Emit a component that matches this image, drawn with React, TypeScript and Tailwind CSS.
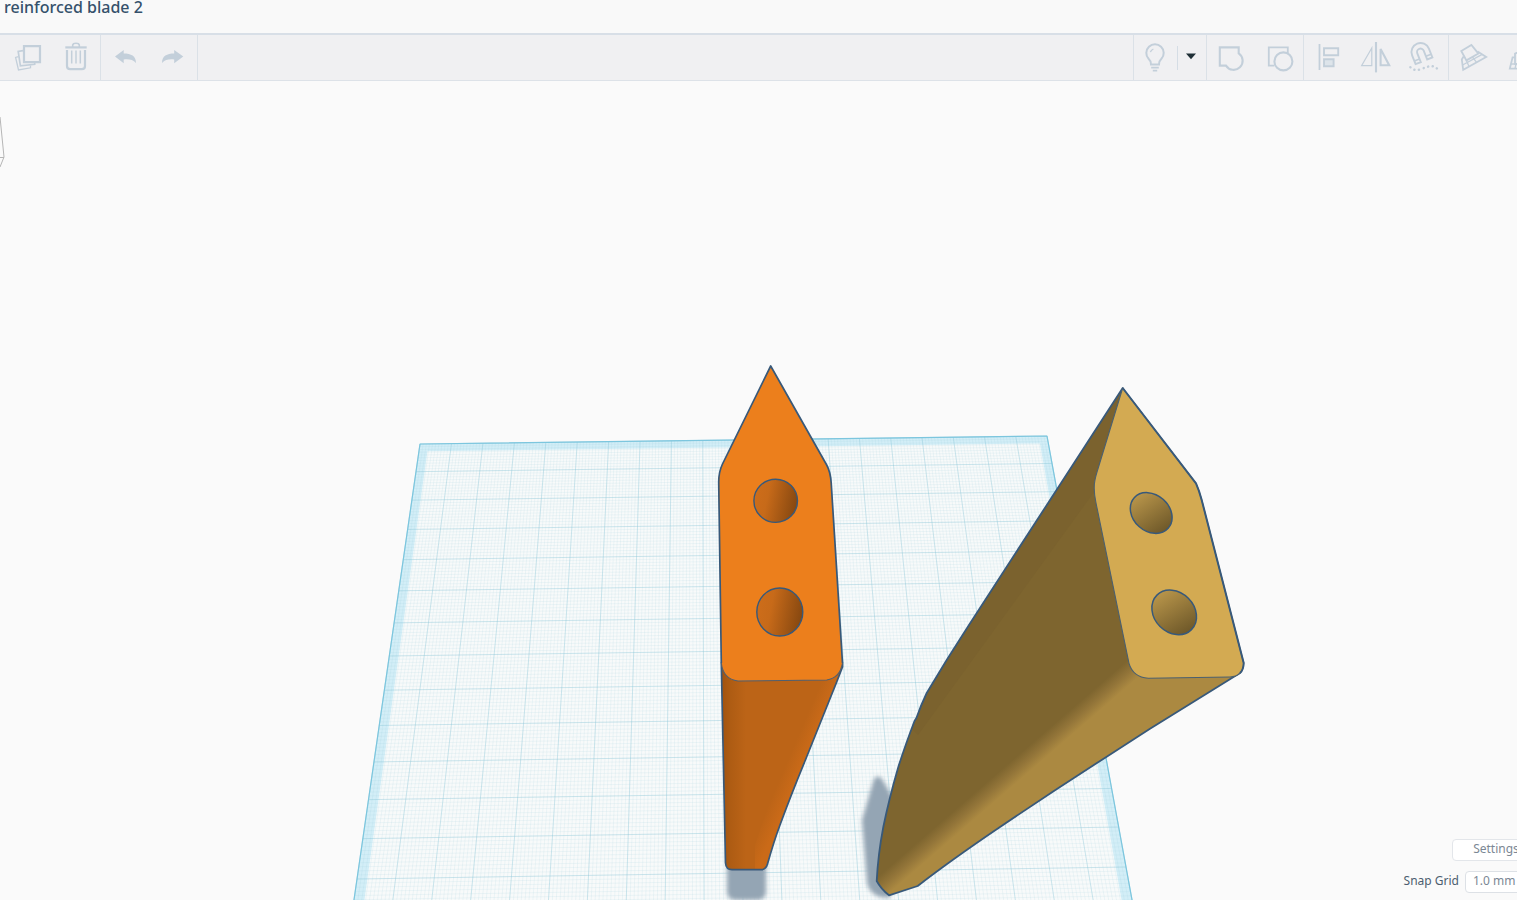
import type { ReactNode } from "react";

type Point = [number, number];

// Corners of the workplane: back left, back right, front right, front left.
const CORNERS: Point[] = [
  [420, 444],
  [1047, 436],
  [1126, 867],
  [357, 879],
];
const COLUMNS = 20;
const ROWS = 13;
const LAST_ROW = 15;
const BAND = 0.27;

function makeProjection([p0, p1, p2, p3]: Point[]) {
  const dx1 = p1[0] - p2[0];
  const dx2 = p3[0] - p2[0];
  const dy1 = p1[1] - p2[1];
  const dy2 = p3[1] - p2[1];
  const sx = p0[0] - p1[0] + p2[0] - p3[0];
  const sy = p0[1] - p1[1] + p2[1] - p3[1];
  const den = dx1 * dy2 - dx2 * dy1;
  const g = (sx * dy2 - dx2 * sy) / den;
  const h = (dx1 * sy - sx * dy1) / den;
  return (col: number, row: number) => {
    const u = col / COLUMNS;
    const v = row / ROWS;
    const w = g * u + h * v + 1;
    const x = ((p1[0] - p0[0] + g * p1[0]) * u + (p3[0] - p0[0] + h * p3[0]) * v + p0[0]) / w;
    const y = ((p1[1] - p0[1] + g * p1[1]) * u + (p3[1] - p0[1] + h * p3[1]) * v + p0[1]) / w;
    return `${x.toFixed(2)} ${y.toFixed(2)}`;
  };
}

const project = makeProjection(CORNERS);

function gridPath(step: number) {
  let d = "";
  for (let i = 0; i <= Math.round(COLUMNS / step); i++) {
    d += `M${project(i * step, 0)}L${project(i * step, LAST_ROW)}`;
  }
  for (let i = 0; i <= Math.round(LAST_ROW / step); i++) {
    d += `M${project(0, i * step)}L${project(COLUMNS, i * step)}`;
  }
  return d;
}

const PLATE = `M${project(0, LAST_ROW)}L${project(0, 0)}L${project(COLUMNS, 0)}L${project(COLUMNS, LAST_ROW)}`;
const PLATE_INNER = `M${project(BAND, LAST_ROW)}L${project(BAND, BAND)}L${project(COLUMNS - BAND, BAND)}L${project(COLUMNS - BAND, LAST_ROW)}Z`;
const MINOR_GRID = gridPath(0.1);
const MAJOR_GRID = gridPath(1);

const ORANGE_FACE =
  "M770.7 366L722.5 464Q718.7 472 718.7 482L721.3 663Q723 679 738 681L826.7 680Q840 678 842.5 663L831.2 483Q830.5 472 826.7 465Z";
const ORANGE_BODY =
  "M721.3 663L725.5 863Q726 869.7 732 869.7L761 869.7Q766 869.5 767.5 864Q774 841 780 825Q791 795 805 761L836.7 682L842.5 667L842.5 663Z";
const GOLD_FACE =
  "M1122.7 388L1196 483.3Q1199 490 1201.7 500L1243.7 663Q1243.5 670 1240 673Q1236 677 1230 677L1148.3 678.3Q1133 677 1129 663.3L1096 503Q1093 489 1095 480Q1096 475 1097 472Z";
const GOLD_BODY =
  "M1122.7 388L969 625L946.7 660L926.7 693Q921 705 916.4 718L914.5 721Q905 746 898.3 767Q889 799 883.3 827Q878 855 876.7 881Q881 889 889 895.3L917.7 886Q950 861 996.7 829.3Q1050 793 1106.7 756.7L1150 728.7L1240 673L1200 560Z";

type ToolProps = {
  label: string;
  children: ReactNode;
};

function Tool({ label, children }: ToolProps) {
  return (
    <button type="button" aria-label={label} className="h-full w-12 shrink-0 text-[#c3cfda] hover:bg-gray-200">
      <svg viewBox="0 0 48 45" className="h-full w-full" fill="none" stroke="currentColor" strokeWidth="2.1">
        {children}
      </svg>
    </button>
  );
}

function Toolbar() {
  return (
    <div role="toolbar" className="flex h-12 shrink-0 overflow-hidden border-t-2 border-b border-t-[#d8dfe7] border-b-[#dde2e8] bg-[#f0f0f2]">
      <div className="flex w-[101px] shrink-0 justify-end border-r border-[#dbe1e7]">
        <Tool label="Duplicate">
          <path d="M20 11.2H36V27.2H20Z" strokeWidth="2.2" />
          <path d="M19 15.7L14.2 16.5L16.4 30.8L30.7 29.3V28" strokeWidth="1.7" />
          <path d="M14.5 21.7L11.6 22.4L14.5 35L26.5 32.8V30.5" strokeWidth="1.3" />
        </Tool>
        <Tool label="Delete">
          <path d="M13.3 12.4H34.7" strokeWidth="2.2" />
          <path d="M20.7 12V10Q21 8.2 24 8.2Q27 8.2 27.3 10V12" strokeWidth="1.6" />
          <path d="M15 15V31Q15 34.2 18.2 34.2H29.8Q33 34.2 33 31V15" strokeWidth="2.2" />
          <path d="M19.7 15.5V28.5M24 15.5V28.5M28.3 15.5V28.5" strokeWidth="1.5" />
        </Tool>
      </div>
      <div className="flex shrink-0 border-r border-[#dbe1e7]">
        <Tool label="Undo">
          <path d="M14 21.6L22.7 15V18.6C30 18.6 35 21 35 28C32 24.4 28 24 22.7 24.4V28.2Z" fill="currentColor" stroke="none" />
        </Tool>
        <Tool label="Redo">
          <path d="M34.3 21.6L25.2 15V18.6C18 18.6 13 21 13 28C16 24.4 20 24 25.2 24.4V28.2Z" fill="currentColor" stroke="none" />
        </Tool>
      </div>

      <div className="ml-auto flex shrink-0 items-center border-x border-[#dbe1e7]">
        <button type="button" aria-label="Show all" className="h-full w-[43px] text-[#c3cfda] hover:bg-gray-200">
          <svg viewBox="0 0 43 45" className="h-full w-full" fill="none" stroke="currentColor" strokeWidth="2">
            <path d="M17 29.5Q17 26 14.6 23.8A8.7 8.7 0 1 1 27.4 23.8Q25 26 25 29.5Z" />
            <path d="M16.4 17.2Q17 15 19.4 14" strokeWidth="1.3" />
            <path d="M17.2 32.6H24.8M18.8 35.6H23.2" strokeWidth="1.7" />
          </svg>
        </button>
        <span className="h-6 w-px bg-[#d5dde5]" />
        <button type="button" aria-label="Visibility options" className="h-full w-7 text-[#1f2f36] hover:bg-gray-200">
          <svg viewBox="0 0 28 45" className="h-full w-full" fill="currentColor">
            <path d="M8 18.6H18L13 24.2Z" />
          </svg>
        </button>
      </div>
      <div className="flex shrink-0 border-r border-[#dbe1e7]">
        <Tool label="Group">
          <path d="M12.8 12.4H31.7V18.4A9 9 0 1 1 19 30.6H12.8Z" />
        </Tool>
        <Tool label="Ungroup">
          <path d="M19.4 30.6H13.8V12.4H32.8V18" strokeWidth="1.8" />
          <circle cx="28.4" cy="26.4" r="9" />
        </Tool>
      </div>
      <div className="flex shrink-0 border-r border-[#dbe1e7]">
        <Tool label="Align">
          <path d="M15.5 9V35" strokeWidth="1.8" />
          <path d="M20 13.2H34.2V20.2H20Z" strokeWidth="1.9" />
          <path d="M20 24.2H29.6V31.2H20Z" strokeWidth="1.9" fill="#dde4ea" />
        </Tool>
        <Tool label="Mirror">
          <path d="M24 7V37.4" />
          <path d="M19.8 13V30.6H9.6Z" strokeWidth="1.2" />
          <path d="M28.6 14V30.2H37.2Z" />
        </Tool>
        <Tool label="Cruise">
          <path d="M15.6 29.1L12.1 20.3A9 9 0 1 1 28.9 13.7L32.4 22.5L27.2 24.5L23.7 15.7A3.4 3.4 0 1 0 17.3 18.3L20.8 27.1Z" strokeWidth="1.9" />
          <path d="M14.3 25.9L19.5 23.9M31.1 19.3L25.9 21.3" strokeWidth="1.6" />
          <path d="M10.4 32.2Q14 36.4 20.7 34.4Q27 31.4 31 31.2Q35 31.2 37.4 34" strokeWidth="2.5" strokeLinecap="round" strokeDasharray="0.1 4.6" />
        </Tool>
      </div>
      <div className="flex w-[68px] shrink-0 overflow-hidden">
        <Tool label="Workplane">
          <path d="M12.3 16L22.4 10L29.4 18.6L17.4 25.4Z" strokeWidth="1.8" />
          <path d="M14.6 21.5L12.8 24.5L14.2 34.8L37.2 22L28.6 16.6" strokeWidth="1.8" />
          <path d="M13.6 30L33.2 19.4M17.4 25.4L20 31.4M23.4 22L27.4 27.2" strokeWidth="1.3" />
        </Tool>
        <Tool label="Ruler">
          <path d="M18 29V18.6L27 15V29Z" strokeWidth="1.8" />
          <path d="M18 22.4H15.6L12.8 33.6H36" strokeWidth="1.8" />
          <path d="M14 29H34M19 29L18 33.6" strokeWidth="1.3" />
        </Tool>
      </div>
    </div>
  );
}

function Scene() {
  return (
    <svg
      role="img"
      aria-label="Workplane with two blades"
      viewBox="0 81 1517 819"
      preserveAspectRatio="xMidYMid slice"
      className="absolute inset-0 h-full w-full"
      fill="none"
      strokeLinejoin="round"
    >
      <defs>
        <linearGradient id="orangeLeft" gradientUnits="userSpaceOnUse" x1="722" y1="760" x2="746" y2="760">
          <stop offset="0" stopColor="#a2530f" />
          <stop offset="0.35" stopColor="#ae5c13" />
          <stop offset="1" stopColor="#bc6417" />
        </linearGradient>
        <linearGradient id="orangeRight" gradientUnits="userSpaceOnUse" x1="790" y1="755" x2="804" y2="761">
          <stop offset="0" stopColor="#ca6a18" stopOpacity="0" />
          <stop offset="1" stopColor="#ca6a18" />
        </linearGradient>
        <linearGradient id="orangeHole" x1="0" y1="0.4" x2="1" y2="0.6">
          <stop offset="0" stopColor="#cd6d1a" />
          <stop offset="0.3" stopColor="#c76a19" />
          <stop offset="1" stopColor="#854710" />
        </linearGradient>
        <linearGradient id="goldBody" gradientUnits="userSpaceOnUse" x1="1001" y1="770" x2="1014" y2="785">
          <stop offset="0" stopColor="#7e652f" />
          <stop offset="0.5" stopColor="#937539" />
          <stop offset="1" stopColor="#ab8941" />
        </linearGradient>
        <linearGradient id="goldHole" x1="0" y1="0.4" x2="1" y2="0.6">
          <stop offset="0" stopColor="#b8954a" />
          <stop offset="1" stopColor="#6e5829" />
        </linearGradient>
        <filter id="soft" x="-20%" y="-20%" width="140%" height="140%">
          <feGaussianBlur stdDeviation="2.2" />
        </filter>
      </defs>

      {/* corner of the view cube */}
      <path d="M0 117L4 157L0 167M0 157.5H4" stroke="#b5b5b5" />

      {/* workplane */}
      <path d={PLATE} fill="#d3eef7" />
      <path d={PLATE_INNER} fill="#f8fafa" />
      <path d={MINOR_GRID} stroke="#8fcbdc" strokeOpacity="0.13" strokeWidth="1" />
      <path d={MAJOR_GRID} stroke="#86c3d8" strokeOpacity="0.32" strokeWidth="1" />
      <path d={PLATE} stroke="#7cc6de" strokeWidth="1.2" />

      {/* shadows */}
      <g fill="#94a5b4" filter="url(#soft)">
        <path d="M727 850H766V892Q765 900 758 900H735Q728 900 727 892Z" />
        <path d="M874 779Q878 774 882 779L896 803L890 898L880 897Q869 893 867 883L862 820Z" />
      </g>

      {/* orange blade */}
      <path d={ORANGE_BODY} fill="url(#orangeLeft)" />
      <path d="M810 681L755 845L755 869H763L767.5 864Q774 841 780 825Q791 795 805 761L838 676Z" fill="url(#orangeRight)" />
      <path d={ORANGE_BODY} stroke="#38597a" strokeWidth="1.7" />
      <path d={ORANGE_FACE} fill="#ec7f1c" />
      <path d="M721.3 663Q723 679 738 681L826.7 680Q840 678 842.5 663" stroke="#4f5f70" strokeWidth="1.1" />
      <path
        d="M721.3 663L718.7 482Q718.7 472 722.5 464L770.7 366L826.7 465Q830.5 472 831.2 483L842.5 663"
        stroke="#38597a"
        strokeWidth="1.7"
      />
      <g fill="url(#orangeHole)" stroke="#38597a" strokeWidth="1.4">
        <ellipse cx="775.7" cy="500.8" rx="21.8" ry="21.6" />
        <ellipse cx="779.8" cy="612" rx="23" ry="24" />
      </g>

      {/* gold blade */}
      <path d={GOLD_BODY} fill="url(#goldBody)" />
      <path d="M1122.7 388L1095 480L1094 492L918 735L912 729L926.7 693L946.7 660Z" fill="#78602d" fillOpacity="0.5" />
      <path d={GOLD_BODY} stroke="#38597a" strokeWidth="1.8" />
      <path d={GOLD_FACE} fill="#d3aa52" />
      <path d={GOLD_FACE} stroke="#4b6070" strokeWidth="1.1" />
      <path d="M1122.7 388L1196 483.3Q1199 490 1201.7 500L1243.7 663Q1243.5 670 1240 673" stroke="#38597a" strokeWidth="2" />
      <g fill="url(#goldHole)" stroke="#38597a" strokeWidth="1.5">
        <ellipse cx="1151.2" cy="513" rx="22.8" ry="18.2" transform="rotate(42 1151.2 513)" />
        <ellipse cx="1174.2" cy="612.4" rx="24.4" ry="20" transform="rotate(45 1174.2 612.4)" />
      </g>
    </svg>
  );
}

export default function App() {
  return (
    <div className="flex h-screen flex-col overflow-hidden bg-[#fafafa] font-['Noto_Sans',sans-serif]">
      <header className="h-[33px] shrink-0 bg-[#f9f9f9] px-1">
        <h1 className="text-base leading-[14px] font-medium text-[#35516b]">reinforced blade 2</h1>
      </header>
      <Toolbar />
      <main className="relative flex-1 overflow-hidden">
        <Scene />
        <div className="absolute -right-[25px] bottom-[7px] flex flex-col items-end gap-[10px] text-xs text-[#7b8794]">
          <button type="button" className="h-[22px] w-[90px] rounded-sm border border-[#e3e6ea] bg-white pr-[2px] pb-[2px]">
            Settings
          </button>
          <div className="flex items-center gap-[6px]">
            <label htmlFor="snap-grid" className="pb-[2px] text-[#4c5e70]">
              Snap Grid
            </label>
            <select id="snap-grid" className="h-[22px] w-[77px] appearance-none rounded-sm border border-[#dde1e6] bg-white px-[7px] pb-[2px]">
              <option>1.0 mm</option>
              <option>0.5 mm</option>
              <option>0.1 mm</option>
            </select>
          </div>
        </div>
      </main>
    </div>
  );
}
